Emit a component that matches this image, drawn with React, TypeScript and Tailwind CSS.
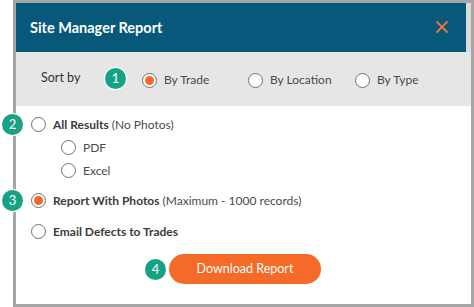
import React from "react";

function Badge({ n, className = "" }: { n: number; className?: string }) {
  return (
    <span
      className={
        "absolute flex h-[21px] w-[21px] items-center justify-center rounded-full bg-[#17a185] text-[13px] leading-none text-white ring-1 ring-white " +
        className
      }
    >
      {n}
    </span>
  );
}

function Radio({ checked = false }: { checked?: boolean }) {
  return (
    <span className="flex h-[15px] w-[15px] shrink-0 items-center justify-center rounded-full border-[1.5px] border-[#707070] bg-white">
      {checked && <span className="h-[9px] w-[9px] rounded-full bg-[#f26a2a]" />}
    </span>
  );
}

function Option({
  label,
  note,
  checked,
  bold,
}: {
  label: string;
  note?: string;
  checked?: boolean;
  bold?: boolean;
}) {
  return (
    <div className="flex items-center gap-[7px]">
      <Radio checked={checked} />
      <span className="text-[12px] text-[#4a4a4a]">
        <span className={bold ? "font-bold text-[#3a3a3a]" : ""}>{label}</span>
        {note && <span> {note}</span>}
      </span>
    </div>
  );
}

export default function App() {
  return (
    <div
      className="h-[307px] w-[474px] bg-white pl-[13px]"
      style={{ fontFamily: "Lato, 'Open Sans', sans-serif" }}
    >
      <div className="relative flex h-[307px] w-[461px] flex-col border-[3px] border-[#a6a6a6] bg-white">
        {/* header */}
        <div className="flex h-[49px] shrink-0 items-center justify-between border-r-[5px] border-[#dcdcdc] bg-[#07587a] pl-[14px] pr-[18px]">
          <span className="text-[14.5px] font-bold text-white">Site Manager Report</span>
          <svg width="12" height="12" viewBox="0 0 12 12" className="mt-[-2px]">
            <path d="M1 1 L11 11 M11 1 L1 11" stroke="#e8773d" strokeWidth="1.8" strokeLinecap="round" />
          </svg>
        </div>

        {/* sort by */}
        <div className="relative flex h-[54px] shrink-0 items-center bg-[#e6e6e6] pl-[25px] pt-[2px] text-[12.5px] text-[#333]">
          <span className="mt-[-3px] w-[101px]">Sort by</span>
          <Badge n={1} className="left-[89px] top-[16px]" />
          <div className="flex items-center">
            <div className="w-[106px]">
              <Option label="By Trade" checked />
            </div>
            <div className="w-[107px]">
              <Option label="By Location" />
            </div>
            <Option label="By Type" />
          </div>
        </div>

        {/* body */}
        <div className="relative flex flex-col pl-[15px] pt-[10px]">
          <div className="relative flex h-[17px] items-center">
            <Badge n={2} className="left-[-29px] top-[-2px]" />
            <Option label="All Results" note="(No Photos)" bold />
          </div>
          <div className="ml-[30px] mt-[6px] flex flex-col gap-[6px]">
            <div className="flex h-[17px] items-center">
              <Option label="PDF" />
            </div>
            <div className="flex h-[17px] items-center">
              <Option label="Excel" />
            </div>
          </div>
          <div className="relative mt-[13px] flex h-[17px] items-center">
            <Badge n={3} className="left-[-29px] top-[-2px]" />
            <Option label="Report With Photos" note="(Maximum - 1000 records)" checked bold />
          </div>
          <div className="mt-[14px] flex h-[17px] items-center">
            <Option label="Email Defects to Trades" bold />
          </div>
          <div className="relative mt-[14px] flex justify-center pr-[12px]">
            <div className="relative">
              <Badge n={4} className="left-[-24px] top-[5px]" />
              <button className="flex h-[30px] w-[152px] items-center justify-center rounded-full bg-[#f56a26] text-[12.5px] text-white">
                Download Report
              </button>
            </div>
          </div>
        </div>
      </div>
    </div>
  );
}
